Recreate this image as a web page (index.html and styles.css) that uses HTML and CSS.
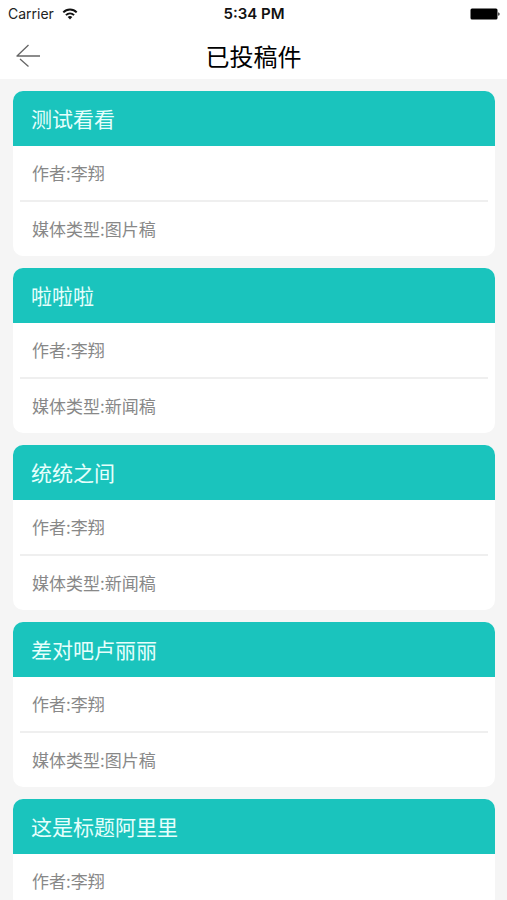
FILE: index.html
```
<!DOCTYPE html>
<html lang="zh-CN">
<head>
  <meta charset="UTF-8">
  <meta name="viewport" content="width=device-width, initial-scale=1.0">
  <title>已投稿件</title>
  <link rel="stylesheet" href="styles.css">
</head>
<body>
  <header class="top">
    <div class="status-bar">
      <div class="carrier">
        <span>Carrier</span>
        <svg class="wifi" width="16" height="12" viewBox="0 0 16 12" aria-hidden="true">
          <path d="M1.3 4.4 C5 0.6 11 0.6 14.7 4.4" fill="none" stroke="#111" stroke-width="2"/>
          <path d="M3.9 7.1 C6.3 4.8 9.7 4.8 12.1 7.1" fill="none" stroke="#111" stroke-width="1.9"/>
          <path d="M5.7 9 C7 7.8 9 7.8 10.3 9 L8 11.5 Z" fill="#111"/>
        </svg>
      </div>
      <span class="time">5:34 PM</span>
      <div class="power">
        <svg width="30" height="12" viewBox="0 0 30 12" aria-hidden="true">
          <rect x="0.5" y="0.5" width="27" height="11" rx="1.5" fill="#000"/>
          <path d="M28.3 4.2 C30 4.6 30 7.4 28.3 7.8 Z" fill="#000"/>
        </svg>
      </div>
    </div>
    <nav class="nav-bar">
      <button type="button" class="back" aria-label="返回">
        <svg width="24" height="24" viewBox="0 0 24 24" aria-hidden="true">
          <path d="M12.5 1 L1 12 M0.5 12 H24 M4 15 L12.5 22.5" fill="none" stroke="#666" stroke-width="1.3"/>
        </svg>
      </button>
      <h1>已投稿件</h1>
    </nav>
  </header>

  <main class="list">
    <article class="card">
      <h2>测试看看</h2>
      <p>作者:李翔</p>
      <hr>
      <p>媒体类型:图片稿</p>
    </article>
    <article class="card">
      <h2>啦啦啦</h2>
      <p>作者:李翔</p>
      <hr>
      <p>媒体类型:新闻稿</p>
    </article>
    <article class="card">
      <h2>统统之间</h2>
      <p>作者:李翔</p>
      <hr>
      <p>媒体类型:新闻稿</p>
    </article>
    <article class="card">
      <h2>差对吧卢丽丽</h2>
      <p>作者:李翔</p>
      <hr>
      <p>媒体类型:图片稿</p>
    </article>
    <article class="card">
      <h2>这是标题阿里里</h2>
      <p>作者:李翔</p>
    </article>
  </main>
</body>
</html>
```

FILE: styles.css
```
* {
    box-sizing: border-box;
}

body {
    display: flex;
    flex-direction: column;
    height: 100vh;
    margin: 0;
    background-color: #f5f5f5;
    font-family: "Noto Sans CJK SC", sans-serif;
}

/* Status bar and title */
.top {
    flex: none;
    background-color: #ffffff;
}

.status-bar {
    display: grid;
    grid-template-columns: 1fr auto 1fr;
    align-items: center;
    height: 27px;
    padding: 0 7px 0 8px;
    font-family: Inter, sans-serif;
    font-size: 14px;
    color: #222;
}

.carrier {
    display: flex;
    align-items: center;
    gap: 8px;
}

.time {
    font-weight: 600;
    font-size: 15px;
    color: #111;
}

.power {
    display: flex;
    justify-content: flex-end;
}

.nav-bar {
    display: grid;
    grid-template-columns: 56px 1fr 56px;
    align-items: center;
    height: 52px;
    padding-top: 6px;
}

.back {
    display: flex;
    align-items: center;
    height: 46px;
    padding: 0 16px;
    border: none;
    background: none;
    cursor: pointer;
}

h1 {
    margin: 0;
    font-size: 24px;
    font-weight: 400;
    line-height: 46px;
    text-align: center;
    color: #000;
}

/* Submitted articles */
.list {
    flex: 1;
    min-height: 0;
    padding: 12px 12px 0 13px;
    overflow-y: auto;
    scrollbar-width: none;
}

.card {
    margin-bottom: 12px;
    border-radius: 10px;
    background-color: #ffffff;
    overflow: hidden;
}

.card h2 {
    margin: 0;
    padding: 0 18px;
    background-color: #1ac4bd;
    font-size: 21px;
    font-weight: 400;
    line-height: 55px;
    color: #e6fffc;
}

.card p {
    margin: 0;
    padding: 0 19px;
    font-size: 17px;
    line-height: 54px;
    color: #888;
}

.card hr {
    height: 2px;
    margin: 0 7px;
    border: none;
    background-color: #efefef;
}
```
